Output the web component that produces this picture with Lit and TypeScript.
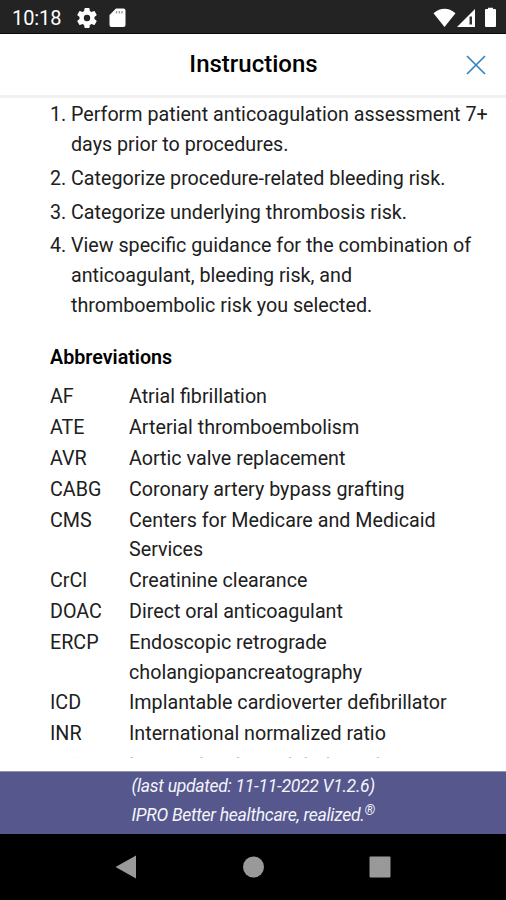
import { LitElement, html, css } from "lit";
import { customElement } from "lit/decorators.js";

const STEPS = [
  ["Perform patient anticoagulation assessment 7+", "days prior to procedures."],
  ["Categorize procedure-related bleeding risk."],
  ["Categorize underlying thrombosis risk."],
  ["View specific guidance for the combination of", "anticoagulant, bleeding risk, and", "thromboembolic risk you selected."],
];

const TERMS: [string, string[]][] = [
  ["AF", ["Atrial fibrillation"]],
  ["ATE", ["Arterial thromboembolism"]],
  ["AVR", ["Aortic valve replacement"]],
  ["CABG", ["Coronary artery bypass grafting"]],
  ["CMS", ["Centers for Medicare and Medicaid", "Services"]],
  ["CrCl", ["Creatinine clearance"]],
  ["DOAC", ["Direct oral anticoagulant"]],
  ["ERCP", ["Endoscopic retrograde", "cholangiopancreatography"]],
  ["ICD", ["Implantable cardioverter defibrillator"]],
  ["INR", ["International normalized ratio"]],
  ["LMWH", ["Low molecular weight heparin"]],
];

@customElement("app-root")
export class AppRoot extends LitElement {
  static styles = css`
    :host {
      display: flex;
      flex-direction: column;
      height: 900px;
      width: 506px;
      overflow: hidden;
      background: #fff;
      color: #202020;
      font-family: Roboto, "Liberation Sans", sans-serif;
      font-size: 19.7px;
      line-height: 29.7px;
    }
    * { box-sizing: border-box; }
    .status {
      flex: none;
      height: 34px;
      display: flex;
      align-items: center;
      background: #232323;
      color: #fff;
      padding: 2px 8px 0 12px;
      border-bottom: 1px solid #0c0c0c;
      font-size: 20px;
      line-height: 34px;
    }
    .clock { width: 65px; letter-spacing: -0.1px; }
    .status svg { display: block; flex: none; }
    .gear { margin-right: 12px; }
    .spacer { flex: 1; }
    .header {
      flex: none;
      height: 64px;
      display: grid;
      grid-template-columns: 60px 1fr 60px;
      align-items: center;
      border-bottom: 3px solid #f1f1f1;
      padding-top: 1px;
      text-align: center;
    }
    .title { grid-column: 2; margin: 0; padding-left: 1px; font-size: 24px; font-weight: 500; color: #000; }
    .close { justify-self: center; display: block; }
    .content { flex: none; height: 660px; overflow: hidden; padding: 2.4px 0 0 50px; }
    .steps { display: flex; flex-direction: column; gap: 4px; }
    .step { display: grid; grid-template-columns: 21px 1fr; }
    .line { display: block; white-space: nowrap; }
    .subhead { margin: 22.4px 0 9.8px; font-size: 19.7px; line-height: 29.7px; font-weight: 600; color: #000; }
    .terms { display: grid; grid-template-columns: 79px 1fr; row-gap: 1.15px; margin: 0; }
    .terms dd { margin: 0; }
    .terms dt:last-of-type { padding-top: 1px; color: #f8f8f8; }
    .terms dd:last-of-type { padding-top: 1px; color: #b8b8b8; }
    .gap { flex: none; height: 13px; }
    .footer {
      flex: none;
      height: 63px;
      background: #55578d;
      border-top: 1px solid #9293b4;
      color: #f4f4fa;
      font-style: italic;
      font-size: 17.6px;
      letter-spacing: -0.31px;
      line-height: 29px;
      padding-left: 131.5px;
    }
    .mark { font-size: 14px; line-height: 0; vertical-align: 6px; }
    .nav {
      flex: 1;
      background: #000;
      display: flex;
      align-items: center;
      justify-content: center;
    }
  `;

  render() {
    return html`
      <div class="status">
        <span class="clock">10:18</span>
        <svg class="gear" width="20" height="20" viewBox="2 2 20 20"><path fill="#fff" fill-rule="evenodd" d="M19.43 12.98a7.8 7.8 0 0 0 0-1.96l2.11-1.65a.5.5 0 0 0 .12-.64l-2-3.46a.5.5 0 0 0-.61-.22l-2.49 1a7.3 7.3 0 0 0-1.69-.98l-.38-2.65A.49.49 0 0 0 14 2h-4a.49.49 0 0 0-.49.42l-.38 2.65c-.61.25-1.17.59-1.69.98l-2.49-1a.5.5 0 0 0-.61.22l-2 3.46a.5.5 0 0 0 .12.64l2.11 1.65a7.9 7.9 0 0 0 0 1.96l-2.11 1.65a.5.5 0 0 0-.12.64l2 3.46c.12.22.39.3.61.22l2.49-1c.52.4 1.08.73 1.69.98l.38 2.65c.03.24.24.42.49.42h4c.25 0 .46-.18.49-.42l.38-2.65c.61-.25 1.17-.59 1.69-.98l2.49 1c.23.09.49 0 .61-.22l2-3.46a.5.5 0 0 0-.12-.64zM12 15.2a3.2 3.2 0 1 1 0-6.4 3.2 3.2 0 0 1 0 6.4z"/></svg>
        <svg width="17" height="20" viewBox="0 0 17 20"><path fill="#fff" d="M7 .5h7.500a2 2 0 0 1 2 2V17a2 2 0 0 1-2 2h-12a2 2 0 0 1-2-2V7z"/><path stroke="#999" stroke-width="1.300" d="M7.500 3v2.500M10.300 3v2.500M13 3v2.500"/></svg>
        <span class="spacer"></span>
        <svg width="65" height="22" viewBox="0 0 65 22"><path fill="#fff" d="M0.500 6.300Q11.500-2.600 22.500 6.300L11.500 20zM24 20L42 2v18z"/><path fill="#333" d="M36.500 9.500h2.500V17.500h-2.500z"/><path fill="#fff" d="M53 2h2V.8h5V2h2a1 1 0 0 1 1 1v16a1 1 0 0 1-1 1h-9a1 1 0 0 1-1-1V3a1 1 0 0 1 1-1z"/></svg>
      </div>
      <div class="header">
        <h1 class="title">Instructions</h1>
        <svg class="close" width="20" height="20" viewBox="0 0 20 20"><path d="M1 1L19 19M19 1L1 19" stroke="#3485c5" stroke-width="1.700" fill="none"/></svg>
      </div>
      <div class="content">
        <div class="steps">
          ${STEPS.map((lines, i) => html`<div class="step"><span>${i + 1}.</span><div>${lines.map((l) => html`<span class="line">${l}</span>`)}</div></div>`)}
        </div>
        <h2 class="subhead">Abbreviations</h2>
        <dl class="terms">
          ${TERMS.map(([k, lines]) => html`<dt>${k}</dt><dd>${lines.map((l) => html`<span class="line">${l}</span>`)}</dd>`)}
        </dl>
      </div>
      <div class="gap"></div>
      <div class="footer">
        <span class="line">(last updated: 11-11-2022 V1.2.6)</span>
        <span class="line">IPRO Better healthcare, realized.<span class="mark">®</span></span>
      </div>
      <div class="nav">
        <svg width="276" height="24" viewBox="0 0 276 24"><path fill="#999" d="M0.500 12L21 0.500V23.500z"/><circle cx="138.500" cy="12" r="10.500" fill="#999"/><rect x="254.500" y="1.500" width="21" height="21" rx="1" fill="#999"/></svg>
      </div>
    `;
  }
}
